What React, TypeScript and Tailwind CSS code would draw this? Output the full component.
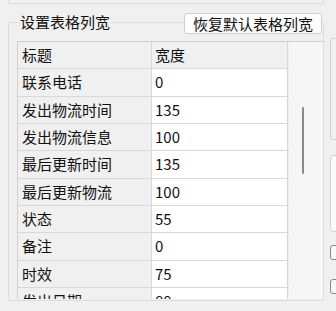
const ROWS: [string, string][] = [
  ["联系电话", "0"],
  ["发出物流时间", "135"],
  ["发出物流信息", "100"],
  ["最后更新时间", "135"],
  ["最后更新物流", "100"],
  ["状态", "55"],
  ["备注", "0"],
  ["时效", "75"],
  ["发出日期", "80"],
];

const FONT = "font-['Microsoft_YaHei','Noto_Sans_CJK_SC',sans-serif]";

function Row({ name, width, header }: { name: string; width: string; header?: boolean }) {
  return (
    <div className="flex h-[27.33px] shrink-0 border-b border-[#d8d8d8]">
      <div className="flex w-[134px] items-center border-r border-[#d8d8d8] bg-[#f0f0f0] pl-[4px]">
        {name}
      </div>
      <div
        className={`flex w-[136px] items-center border-r border-[#d8d8d8] pl-[3px] ${
          header ? "bg-[#f0f0f0]" : "bg-white"
        }`}
      >
        {width}
      </div>
    </div>
  );
}

export default function App() {
  return (
    <div
      className={`relative h-[311px] w-[336px] overflow-hidden bg-[#f0f0f0] text-[15px] leading-[20px] text-[#111] ${FONT}`}
    >
      {/* bottom edge of the box above */}
      <div className="ml-[8px] h-[4px] w-[316px] rounded-b-[2px] border-x border-b border-[#d9d9d9]" />

      <div className="mt-[18px] flex">
        {/* group box */}
        <div className="relative ml-[8px] h-[279px] w-[316px] shrink-0 rounded-[2px] border border-[#dcdcdc]">
          <span className="absolute -top-[11px] left-[10px] bg-[#f0f0f0] px-[1px]">设置表格列宽</span>
          <button className="absolute -top-[10px] right-[1px] h-[21px] rounded-[3px] border border-[#d0d0d0] bg-[#fdfdfd] px-[8px] leading-[18px]">
            恢复默认表格列宽
          </button>

          <div className="pl-[8px] pt-[18px]">
            <div className="flex h-[258px] w-[306px] overflow-hidden border-l border-t border-[#d0d0d0]">
              <div className="flex w-[271px] flex-col">
                <Row name="标题" width="宽度" header />
                {ROWS.map(([n, w]) => (
                  <Row key={n} name={n} width={w} />
                ))}
              </div>
              {/* vertical scroll bar */}
              <div className="flex-1 bg-[#f6f6f6] pl-[13px] pt-[65px]">
                <div className="h-[67px] w-[2px] rounded-full bg-[#8a8a8a]" />
              </div>
            </div>
          </div>
        </div>

        {/* right panel, mostly outside the window */}
        <div className="ml-[6px] flex flex-col">
          <div className="mt-[16px] h-[102px] w-[40px] rounded-[3px] border border-[#d0d0d0]" />
          <div className="mt-[15px] h-[77px] w-[40px] rounded-[4px] border border-[#d0d0d0] bg-[#fbfbfb]" />
          <div className="mt-[13px] h-[15px] w-[15px] rounded-[3px] border border-[#888] bg-[#f8f8f8]" />
          <div className="mt-[19px] h-[15px] w-[15px] rounded-[3px] border border-[#888] bg-[#f8f8f8]" />
        </div>
      </div>
    </div>
  );
}
